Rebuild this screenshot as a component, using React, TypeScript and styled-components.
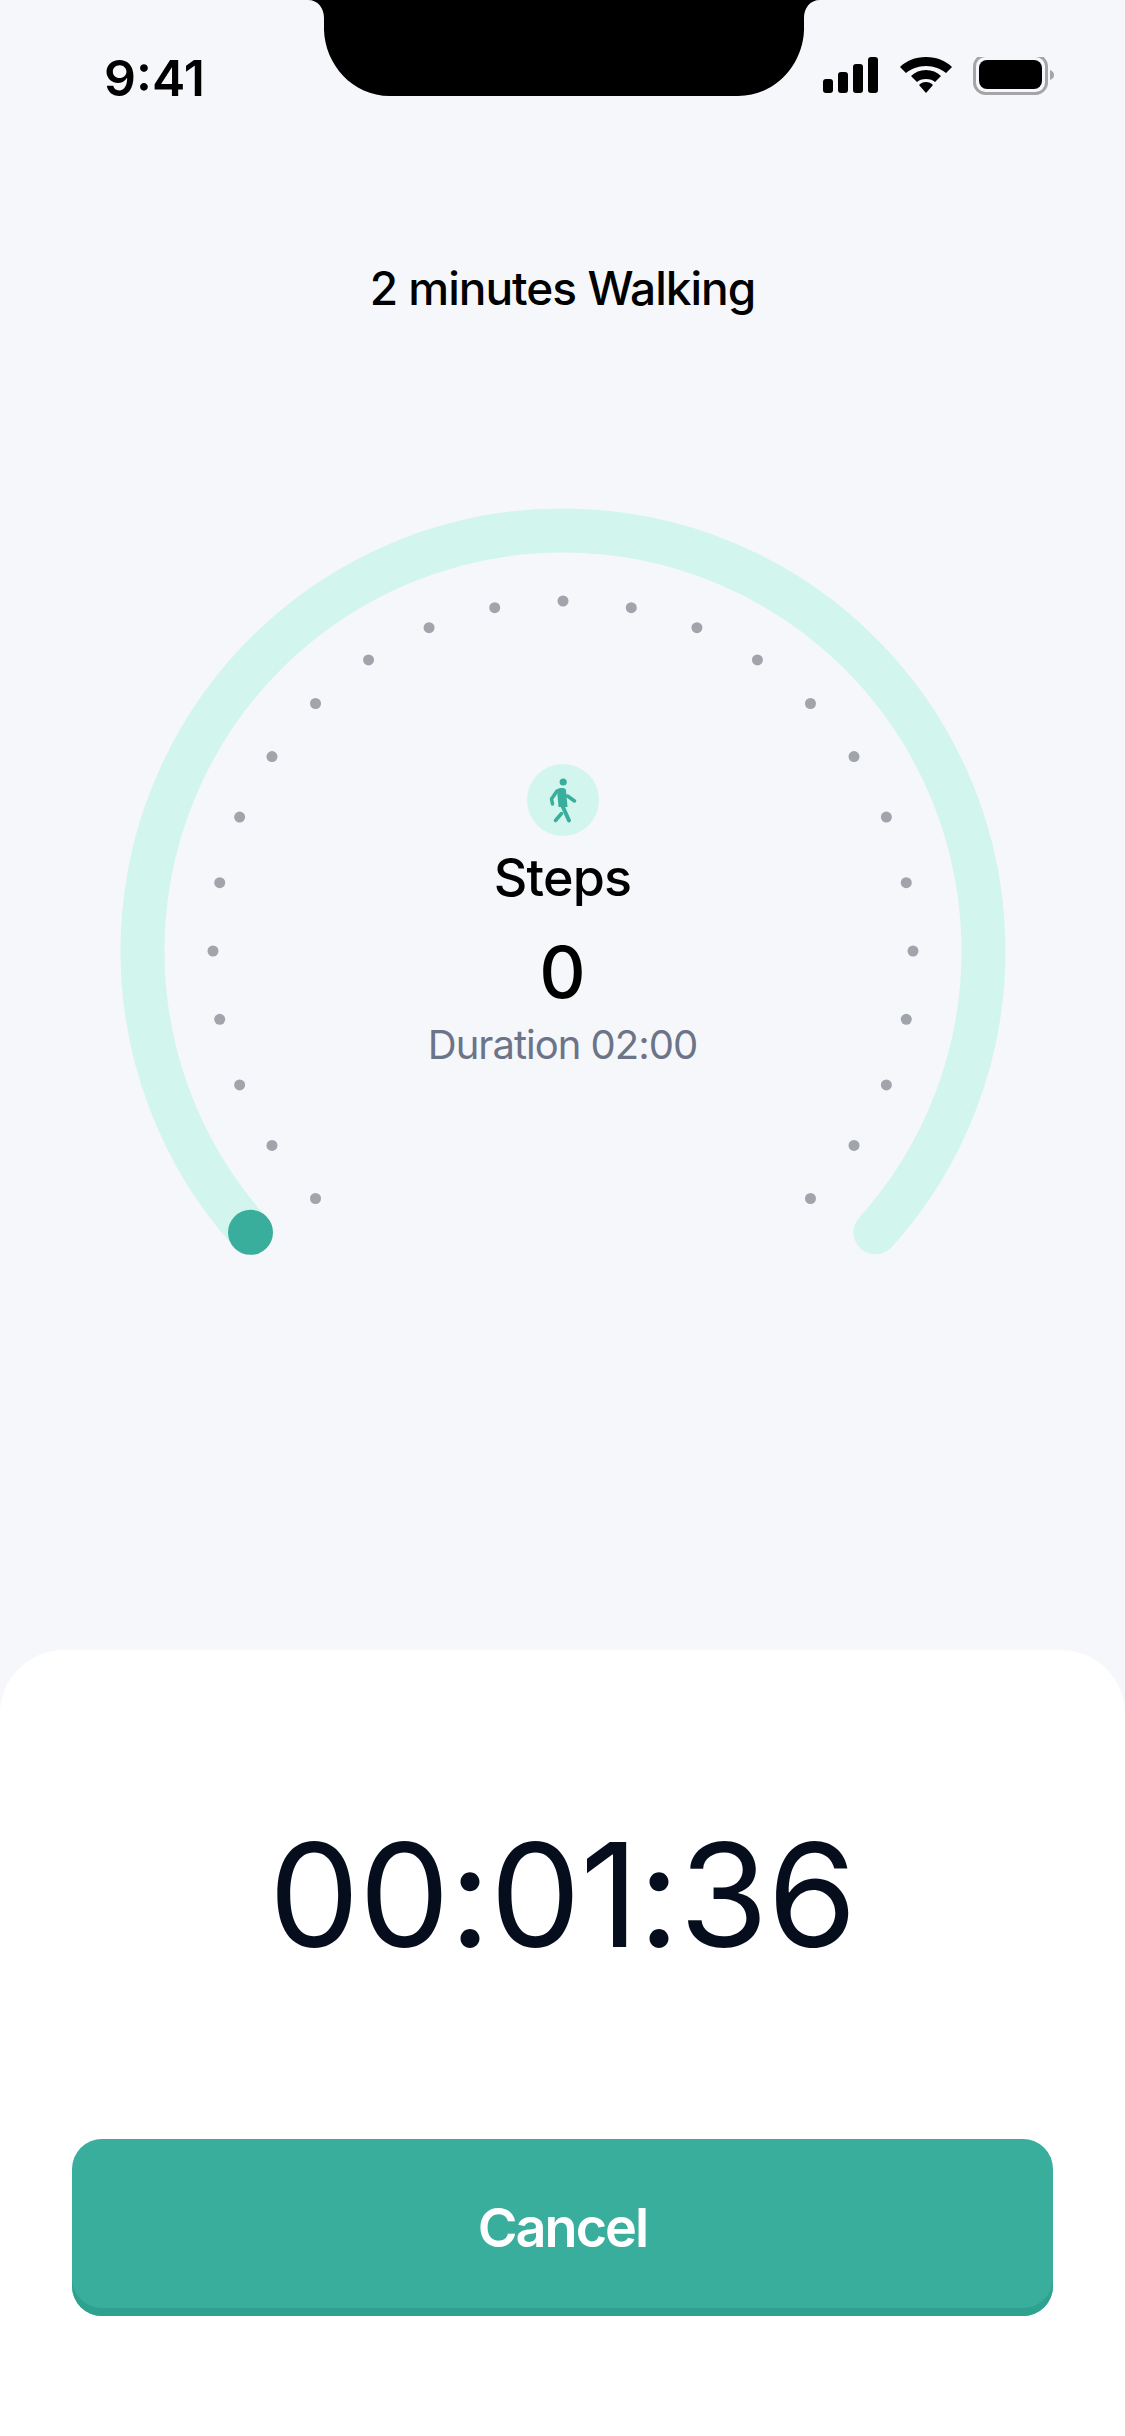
import React from "react";
import styled, { createGlobalStyle } from "styled-components";

const GlobalStyle = createGlobalStyle`
  html, body {
    margin: 0;
    padding: 0;
    background: #f6f7fb;
  }
  * {
    box-sizing: border-box;
  }
`;

const Screen = styled.div`
  position: relative;
  width: 1125px;
  height: 2436px;
  display: flex;
  flex-direction: column;
  overflow: hidden;
  background: #f6f7fb;
  font-family: Inter, "Liberation Sans", sans-serif;
  color: #000;
`;

const Notch = styled.svg`
  position: absolute;
  top: 0;
  left: 308px;
`;

const StatusBar = styled.div`
  height: 156px;
  flex-shrink: 0;
  display: flex;
  justify-content: space-between;
  align-items: flex-start;
  padding: 50px 68px 0 104px;
`;

const Clock = styled.span`
  font-size: 50px;
  line-height: 56px;
  font-weight: 600;
`;

const StatusIcons = styled.div`
  display: flex;
  margin-top: 7px;
`;

const Title = styled.h1`
  margin: 104px 0 0;
  font-size: 46px;
  line-height: 56px;
  font-weight: 500;
  text-align: center;
  letter-spacing: -1px;
`;

const Gauge = styled.div`
  position: relative;
  width: 890px;
  height: 760px;
  margin: 191px auto 0;
`;

const GaugeCenter = styled.div`
  position: absolute;
  top: 257px;
  left: 0;
  right: 0;
  display: flex;
  flex-direction: column;
  align-items: center;
`;

const IconBadge = styled.div`
  width: 72px;
  height: 72px;
  border-radius: 50%;
  background: #d2f5ed;
  display: flex;
  align-items: center;
  justify-content: center;
`;

const StepsLabel = styled.div`
  margin-top: 10px;
  font-size: 52px;
  line-height: 64px;
  font-weight: 500;
  letter-spacing: -0.8px;
`;

const StepsCount = styled.div`
  margin-top: 20px;
  font-size: 72px;
  line-height: 84px;
  font-weight: 500;
`;

const Duration = styled.div`
  margin-top: 6px;
  font-size: 40px;
  line-height: 50px;
  font-weight: 400;
  letter-spacing: -1px;
  color: #6b7488;
`;

const Sheet = styled.div`
  margin-top: auto;
  height: 786px;
  padding: 157px 72px 0;
  display: flex;
  flex-direction: column;
  align-items: stretch;
  background: #fff;
  border-radius: 64px 64px 0 0;
`;

const Timer = styled.div`
  font-size: 144px;
  line-height: 176px;
  font-weight: 400;
  text-align: center;
  letter-spacing: -0.6px;
  color: #060e1e;
`;

const CancelButton = styled.button`
  margin-top: 156px;
  height: 177px;
  border: 0;
  border-radius: 30px;
  background: #3aae9c;
  box-shadow: inset 0 -8px 0 #2fa18f;
  color: #fff;
  font-family: inherit;
  font-size: 54px;
  font-weight: 600;
  letter-spacing: -2px;
`;

const CX = 445;
const CY = 444;
const RING_R = 420.5;
const DOT_R = 350;

const polar = (r: number, deg: number) => {
  const rad = (deg * Math.PI) / 180;
  return { x: CX + r * Math.sin(rad), y: CY - r * Math.cos(rad) };
};

const dots = Array.from({ length: 25 }, (_, i) => polar(DOT_R, -135 + i * 11.25));
const arcStart = polar(RING_R, -132);
const arcEnd = polar(RING_R, 132);

const StatusGlyphs = () => (
  <svg width="234" height="42" viewBox="0 0 234 42">
    <g fill="#000">
      <rect x="0" y="22" width="10" height="14" rx="3" />
      <rect x="15" y="15" width="10" height="21" rx="3" />
      <rect x="30" y="7" width="10" height="29" rx="3" />
      <rect x="45" y="0" width="10" height="36" rx="3" />
      <path d="M103 0 C92 0 83 4 77 10 L83 16 C88 12 95 9 103 9 C111 9 118 12 123 16 L129 10 C123 4 114 0 103 0 Z" />
      <path d="M103 13 C97 13 92 15 88 19 L94 25 C96 23 99 22 103 22 C107 22 110 23 112 25 L118 19 C114 15 109 13 103 13 Z" />
      <path d="M103 25 C100 25 98 26 96 28 L103 36 L110 28 C108 26 106 25 103 25 Z" />
    </g>
    <rect x="151.5" y="-1.5" width="72" height="38" rx="11" fill="none" stroke="#a5a5a8" strokeWidth="3" />
    <rect x="156" y="3" width="63" height="29" rx="8" fill="#000" />
    <path d="M227 13 C230 14 231 16 231 18 C231 20 230 22 227 23 Z" fill="#a5a5a8" />
  </svg>
);

const WalkIcon = () => (
  <svg width="36" height="48" viewBox="0 0 36 48">
    <circle cx="18.200" cy="6" r="3.600" fill="#3aae9c" />
    <path d="M12 13.500 C15 11.500 20 11.500 21 14 L22.500 31 L13.500 31 Z" fill="#3aae9c" />
    <g fill="none" stroke="#3aae9c" strokeLinecap="round" strokeLinejoin="round">
      <path d="M12 15 L6.500 23 L7.500 28" strokeWidth="3.500" />
      <path d="M22.500 20 L29.500 25" strokeWidth="3.500" />
      <path d="M17 29 L24 44.500" strokeWidth="4" />
      <path d="M16.500 37.500 L10.500 44.500" strokeWidth="3.500" />
    </g>
  </svg>
);

const GaugeChart = () => (
  <svg width="890" height="760" viewBox="0 0 890 760">
    <path
      d={`M ${arcStart.x} ${arcStart.y} A ${RING_R} ${RING_R} 0 1 1 ${arcEnd.x} ${arcEnd.y}`}
      fill="none"
      stroke="#d2f5ed"
      strokeWidth="44"
      strokeLinecap="round"
    />
    {dots.map((dot, i) => (
      <circle key={i} cx={dot.x} cy={dot.y} r="5.500" fill="#a2a4ab" />
    ))}
    <circle cx={arcStart.x} cy={arcStart.y} r="22.500" fill="#3aae9c" />
  </svg>
);

const App = () => {
  return (
    <Screen>
      <GlobalStyle />
      <Notch width="512" height="97" viewBox="0 0 512 97">
        <path
          d="M0 0 C10 0 16 8 16 18 V30 C17 64 44 96 82 96 H430 C468 96 495 64 496 30 V18 C496 8 502 0 512 0 Z"
          fill="#000"
        />
      </Notch>
      <StatusBar>
        <Clock>9:41</Clock>
        <StatusIcons>
          <StatusGlyphs />
        </StatusIcons>
      </StatusBar>
      <Title>2 minutes Walking</Title>
      <Gauge>
        <GaugeChart />
        <GaugeCenter>
          <IconBadge>
            <WalkIcon />
          </IconBadge>
          <StepsLabel>Steps</StepsLabel>
          <StepsCount>0</StepsCount>
          <Duration>Duration 02:00</Duration>
        </GaugeCenter>
      </Gauge>
      <Sheet>
        <Timer>00:01:36</Timer>
        <CancelButton>Cancel</CancelButton>
      </Sheet>
    </Screen>
  );
};

export default App;
